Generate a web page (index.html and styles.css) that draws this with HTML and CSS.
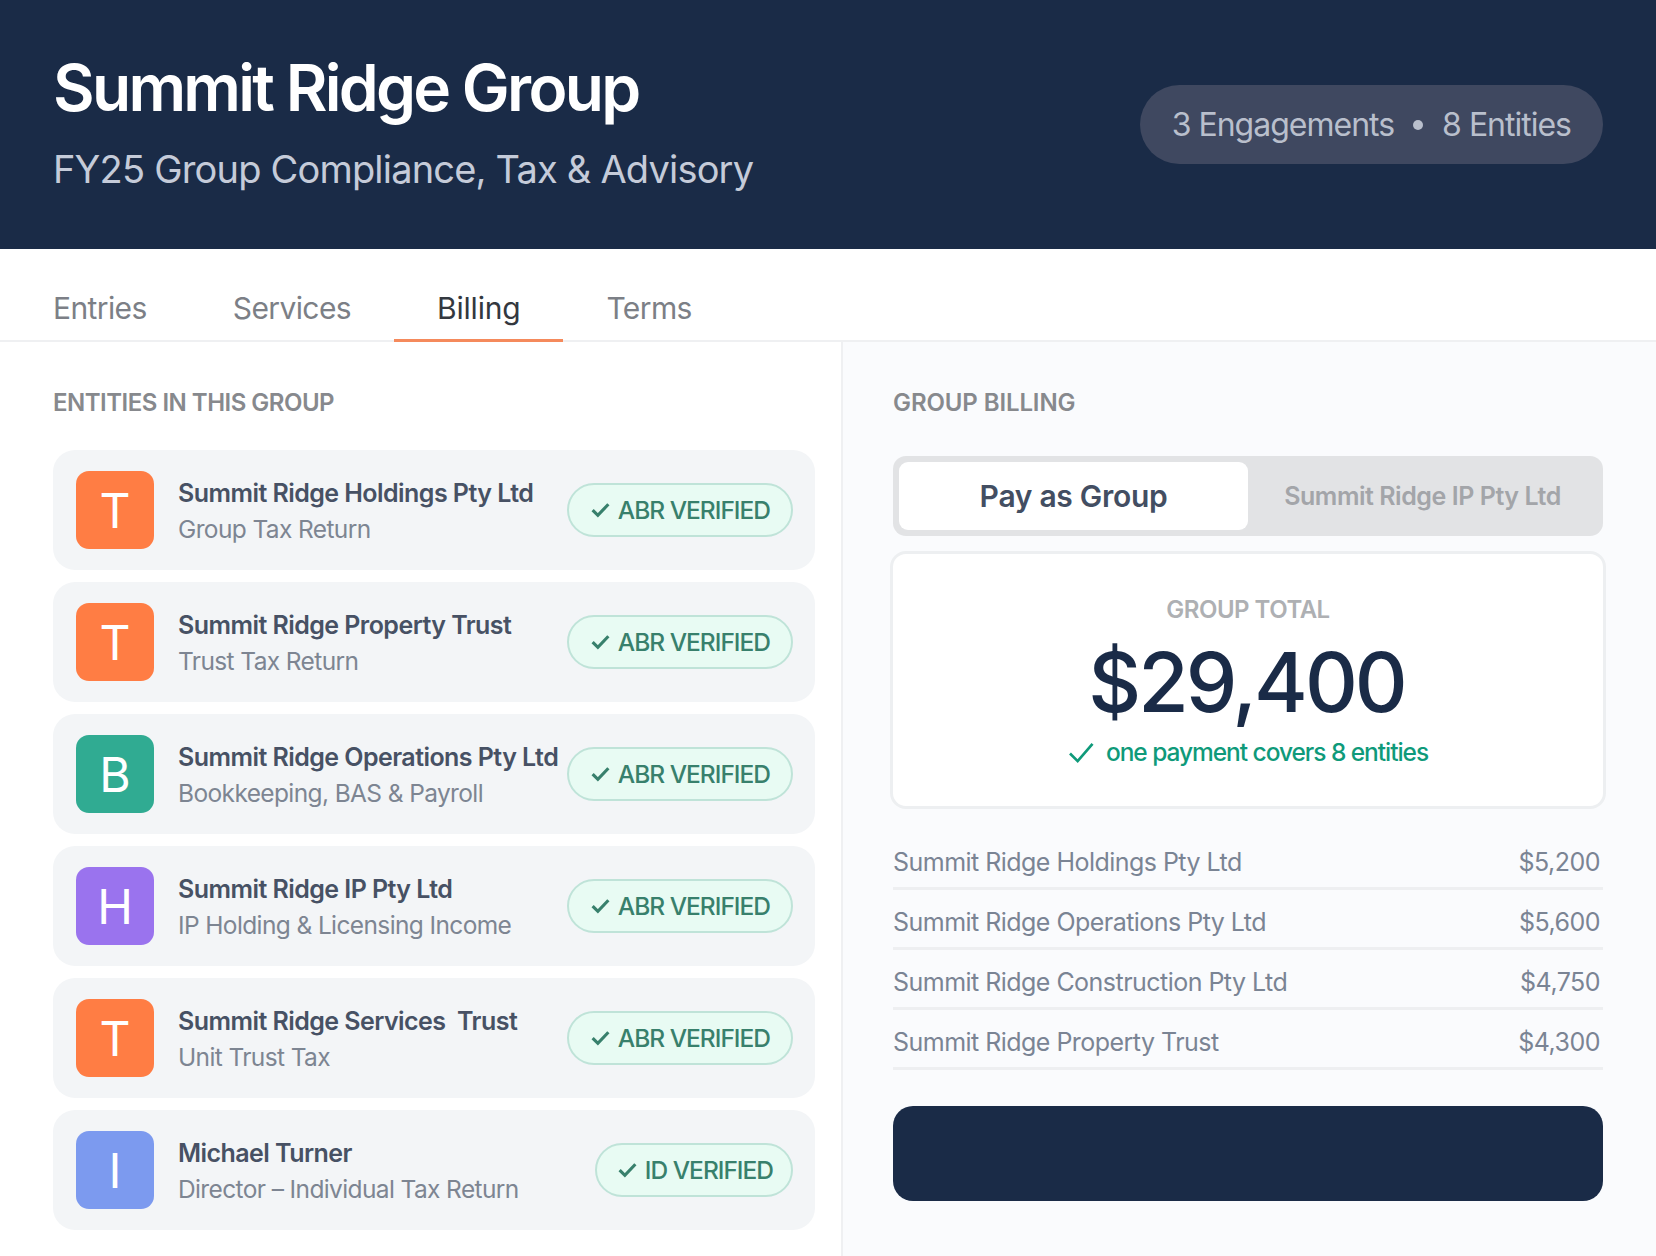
FILE: index.html
```html
<!DOCTYPE html>
<html>
<head>
<meta name="viewport" content="width=device-width, initial-scale=1">
<link rel="stylesheet" href="styles.css">
</head>
<body>
<header class="top">
  <div>
    <h1>Summit Ridge Group</h1>
    <p class="subtitle">FY25 Group Compliance, Tax &amp; Advisory</p>
  </div>
  <div class="pill"><span>3 Engagements</span><i class="dot"></i><span>8 Entities</span></div>
</header>
<nav class="tabs">
  <a class="tab">Entries</a>
  <a class="tab">Services</a>
  <a class="tab active">Billing</a>
  <a class="tab">Terms</a>
</nav>
<main class="panels">
  <section class="left">
    <h2 class="label">ENTITIES IN THIS GROUP</h2>
    <div class="card">
      <div class="avatar orange">T</div>
      <div class="info"><div class="name">Summit Ridge Holdings Pty Ltd</div><div class="sub">Group Tax Return</div></div>
      <div class="badge"><svg viewBox="0 0 20 20"><path d="M2.5 10.500l5 5 10-10.500"/></svg>ABR VERIFIED</div>
    </div>
    <div class="card">
      <div class="avatar orange">T</div>
      <div class="info"><div class="name">Summit Ridge Property Trust</div><div class="sub">Trust Tax Return</div></div>
      <div class="badge"><svg viewBox="0 0 20 20"><path d="M2.5 10.500l5 5 10-10.500"/></svg>ABR VERIFIED</div>
    </div>
    <div class="card">
      <div class="avatar green">B</div>
      <div class="info"><div class="name">Summit Ridge Operations Pty Ltd</div><div class="sub">Bookkeeping, BAS &amp; Payroll</div></div>
      <div class="badge"><svg viewBox="0 0 20 20"><path d="M2.5 10.500l5 5 10-10.500"/></svg>ABR VERIFIED</div>
    </div>
    <div class="card">
      <div class="avatar purple">H</div>
      <div class="info"><div class="name">Summit Ridge IP Pty Ltd</div><div class="sub">IP Holding &amp; Licensing Income</div></div>
      <div class="badge"><svg viewBox="0 0 20 20"><path d="M2.5 10.500l5 5 10-10.500"/></svg>ABR VERIFIED</div>
    </div>
    <div class="card">
      <div class="avatar orange">T</div>
      <div class="info"><div class="name">Summit Ridge Services&nbsp; Trust</div><div class="sub">Unit Trust Tax</div></div>
      <div class="badge"><svg viewBox="0 0 20 20"><path d="M2.5 10.500l5 5 10-10.500"/></svg>ABR VERIFIED</div>
    </div>
    <div class="card">
      <div class="avatar blue">I</div>
      <div class="info"><div class="name">Michael Turner</div><div class="sub">Director – Individual Tax Return</div></div>
      <div class="badge badge-id"><svg viewBox="0 0 20 20"><path d="M2.5 10.500l5 5 10-10.500"/></svg>ID VERIFIED</div>
    </div>
  </section>
  <section class="right">
    <h2 class="label">GROUP BILLING</h2>
    <div class="toggle">
      <div class="opt on">Pay as Group</div>
      <div class="opt">Summit Ridge IP Pty Ltd</div>
    </div>
    <div class="total">
      <div class="total-label">GROUP TOTAL</div>
      <div class="amount">$29,400</div>
      <div class="covers"><svg viewBox="0 0 28 24"><path d="M2 13l8 8L25.500 3"/></svg>one payment covers 8 entities</div>
    </div>
    <div class="rows">
      <div class="row"><span>Summit Ridge Holdings Pty Ltd</span><span>$5,200</span></div>
      <div class="row"><span>Summit Ridge Operations Pty Ltd</span><span>$5,600</span></div>
      <div class="row"><span>Summit Ridge Construction Pty Ltd</span><span>$4,750</span></div>
      <div class="row"><span>Summit Ridge Property Trust</span><span>$4,300</span></div>
    </div>
    <div class="pay"></div>
  </section>
</main>
</body>
</html>
```

FILE: styles.css
```css
* {
  box-sizing: border-box;
}
body {
  margin: 0;
  height: 1256px;
  overflow: hidden;
  display: flex;
  flex-direction: column;
  background: #fff;
  font-family: Inter, "Liberation Sans", sans-serif;
}
.top {
  height: 249px;
  flex: none;
  background: #1a2b47;
  padding: 0 53px 6px 53px;
  display: flex;
  align-items: center;
  justify-content: space-between;
}
h1 {
  margin: 0;
  color: #fff;
  font-size: 64px;
  line-height: 72px;
  font-weight: 600;
  letter-spacing: -2.7px;
}
.subtitle {
  margin: 22px 0 0;
  color: #c5cbd9;
  font-size: 38px;
  line-height: 46px;
  letter-spacing: -0.81px;
}
.pill {
  height: 79px;
  margin-top: 6px;
  padding: 0 32px;
  border-radius: 40px;
  background: #3f4860;
  color: #b9bfcc;
  font-size: 32px;
  letter-spacing: -1px;
  display: flex;
  align-items: center;
  gap: 19px;
}
.dot {
  width: 10px;
  height: 10px;
  border-radius: 50%;
  background: #b9bfcc;
}
.tabs {
  height: 93px;
  flex: none;
  border-bottom: 2px solid #eff0f2;
  padding-left: 53px;
  display: flex;
}
.tab {
  height: 93px;
  padding: 24px 43px 0;
  display: flex;
  align-items: center;
  color: #7c7f86;
  font-size: 30px;
  letter-spacing: -0.6px;
}
.tab:first-child {
  padding-left: 0;
}
.tab.active {
  padding: 27px 43px 0;
  color: #33383f;
  letter-spacing: -0.2px;
  border-bottom: 3px solid #f58a5c;
}
.panels {
  flex: 1;
  display: flex;
}
.left {
  width: 841px;
  padding: 46px 26px 0 53px;
}
.right {
  flex: 1;
  background: #fafbfd;
  border-left: 2px solid #eff0f2;
  padding: 46px 53px 0 50px;
}
.label {
  margin: 0;
  color: #87898d;
  font-size: 24px;
  line-height: 30px;
  font-weight: 600;
  letter-spacing: -0.5px;
}
.left .label {
  margin-bottom: 32px;
}
.right .label {
  margin-bottom: 38px;
  letter-spacing: -0.1px;
}
.card {
  height: 120px;
  margin-bottom: 12px;
  padding: 0 22px 0 23px;
  background: #f3f5f7;
  border-radius: 22px;
  display: flex;
  align-items: center;
}
.avatar {
  width: 78px;
  height: 78px;
  flex: none;
  border-radius: 13px;
  color: #fff;
  font-size: 48px;
  display: flex;
  align-items: center;
  justify-content: center;
}
.orange {
  background: #ff7d44;
}
.green {
  background: #30ab92;
}
.purple {
  background: #9a73ee;
}
.blue {
  background: #7c9aef;
}
.info {
  flex: 1;
  min-width: 0;
  margin-left: 24px;
  padding-top: 1px;
  white-space: nowrap;
}
.name {
  color: #475164;
  font-size: 25px;
  line-height: 32px;
  font-weight: 600;
  letter-spacing: -0.55px;
}
.sub {
  margin-top: 4px;
  color: #7d8592;
  font-size: 24.5px;
  line-height: 32px;
  letter-spacing: -0.62px;
}
.badge {
  height: 54px;
  margin-bottom: 1px;
  padding: 0 21px;
  flex: none;
  border: 2px solid #bfe3d8;
  border-radius: 27px;
  background: #e8fbf3;
  color: #38806c;
  font-size: 24.5px;
  font-weight: 500;
  letter-spacing: -1px;
  display: flex;
  align-items: center;
  gap: 7px;
}
.badge-id {
  padding: 0 18px 0 20px;
}
.badge svg {
  width: 21px;
  height: 21px;
  fill: none;
  stroke: #38806c;
  stroke-width: 3;
}
.toggle {
  height: 80px;
  padding: 6px;
  background: #e2e3e5;
  border-radius: 13px;
  display: flex;
}
.opt {
  flex: 1;
  display: flex;
  align-items: center;
  justify-content: center;
  color: #a3a5a9;
  font-size: 25px;
  font-weight: 600;
  letter-spacing: -0.45px;
}
.opt.on {
  flex: none;
  width: 349px;
  background: #fff;
  border-radius: 9px;
  color: #434e62;
  font-size: 30px;
  letter-spacing: -0.3px;
}
.total {
  height: 258px;
  margin: 15px -3px 0;
  padding-top: 41px;
  background: #fff;
  border: 3px solid #edeff1;
  border-radius: 16px;
  text-align: center;
}
.total-label {
  color: #aeb0b3;
  font-size: 24px;
  line-height: 30px;
  font-weight: 600;
  letter-spacing: -0.5px;
}
.amount {
  margin-top: 8px;
  padding-right: 3px;
  color: #1a2b47;
  font-size: 82px;
  line-height: 100px;
  font-weight: 500;
  letter-spacing: -3px;
}
.covers {
  margin-top: 2px;
  color: #0f9a7a;
  font-size: 24.5px;
  line-height: 34px;
  font-weight: 500;
  letter-spacing: -1.05px;
  display: flex;
  align-items: center;
  justify-content: center;
  gap: 11px;
}
.covers svg {
  width: 27px;
  height: 23px;
  fill: none;
  stroke: #0f9a7a;
  stroke-width: 2.8;
}
.rows {
  margin-top: 21px;
}
.row {
  height: 60px;
  padding: 6px 3px 0 0;
  border-bottom: 3px solid #eeeff1;
  color: #7a8494;
  font-size: 25px;
  letter-spacing: -0.53px;
  display: flex;
  align-items: center;
  justify-content: space-between;
}
.pay {
  height: 95px;
  margin-top: 36px;
  background: #1a2b47;
  border-radius: 20px;
}
```
